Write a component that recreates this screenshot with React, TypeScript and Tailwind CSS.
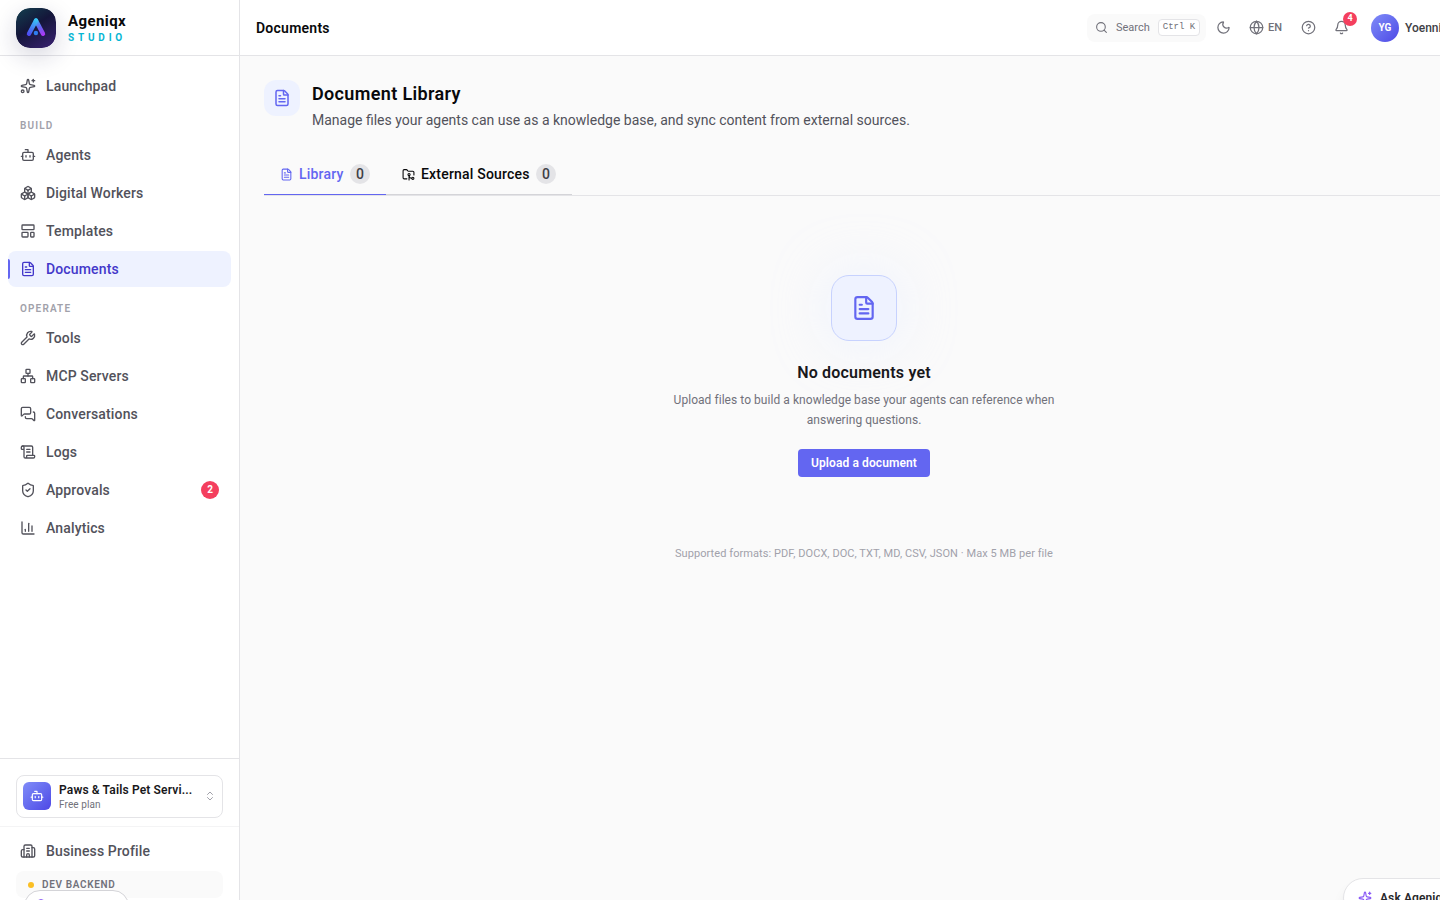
import React from 'react';
import {
  Bell,
  Bot,
  Boxes,
  Building2,
  ChartColumn,
  ChevronsUpDown,
  CircleHelp,
  FileText,
  FolderGit2,
  Globe,
  LayoutTemplate,
  MessagesSquare,
  Moon,
  Network,
  ScrollText,
  Search,
  ShieldCheck,
  Sparkles,
  Wrench,
  type LucideIcon,
} from 'lucide-react';

type NavItem = {
  label: string;
  icon: LucideIcon;
  active?: boolean;
  badge?: number;
};

const buildItems: NavItem[] = [
  { label: 'Agents', icon: Bot },
  { label: 'Digital Workers', icon: Boxes },
  { label: 'Templates', icon: LayoutTemplate },
  { label: 'Documents', icon: FileText, active: true },
];

const operateItems: NavItem[] = [
  { label: 'Tools', icon: Wrench },
  { label: 'MCP Servers', icon: Network },
  { label: 'Conversations', icon: MessagesSquare },
  { label: 'Logs', icon: ScrollText },
  { label: 'Approvals', icon: ShieldCheck, badge: 2 },
  { label: 'Analytics', icon: ChartColumn },
];

const NavLink: React.FC<{ item: NavItem }> = ({ item }) => {
  const Icon = item.icon;
  return (
    <a
      className={`relative flex h-9 items-center gap-2.5 rounded-lg px-3 text-sm font-medium ${
        item.active ? 'bg-[#eef2ff] text-[#4338ca]' : 'text-[#52525b]'
      }`}
    >
      {item.active && <span className="absolute left-0 top-2 h-5 w-0.5 rounded-r-full bg-[#6366f1]" />}
      <Icon size={16} strokeWidth={2} />
      <span className="flex-1 whitespace-nowrap tracking-[0.14px]">{item.label}</span>
      {item.badge && (
        <span className="flex h-[18px] w-[18px] items-center justify-center rounded-full bg-[#f43f5e] text-[10px] font-bold text-white">
          {item.badge}
        </span>
      )}
    </a>
  );
};

const NavHeading: React.FC<{ children: React.ReactNode }> = ({ children }) => (
  <div className="px-3 pt-[14px] pb-1 text-[10px] leading-[15px] font-semibold tracking-[1.15px] text-[#a1a1aa]">
    {children}
  </div>
);

const Logo: React.FC = () => (
  <svg
    className="h-10 w-10 rounded-[14px] shadow-[0_8px_24px_rgba(30,27,75,0.18)]"
    viewBox="0 0 40 40"
    fill="none"
  >
    <defs>
      <linearGradient id="logoBg" x1="6" y1="0" x2="32" y2="40" gradientUnits="userSpaceOnUse">
        <stop stopColor="#133a4c" />
        <stop offset="0.45" stopColor="#14163a" />
        <stop offset="1" stopColor="#35206b" />
      </linearGradient>
      <linearGradient id="logoLeft" x1="20" y1="11" x2="12" y2="27" gradientUnits="userSpaceOnUse">
        <stop stopColor="#38c8f5" />
        <stop offset="1" stopColor="#4f46f5" />
      </linearGradient>
      <linearGradient id="logoRight" x1="20" y1="11" x2="28" y2="27" gradientUnits="userSpaceOnUse">
        <stop stopColor="#38bdf8" />
        <stop offset="0.5" stopColor="#6366f1" />
        <stop offset="1" stopColor="#b035f5" />
      </linearGradient>
    </defs>
    <rect width="40" height="40" rx="14" fill="url(#logoBg)" />
    <path d="M20 12.6L27 25.8" stroke="url(#logoRight)" strokeWidth="4.4" strokeLinecap="round" />
    <path d="M20 12.6L13 25.8" stroke="url(#logoLeft)" strokeWidth="4.4" strokeLinecap="round" />
    <circle cx="19.9" cy="25" r="2.2" fill="#2f7df0" />
  </svg>
);

const Sidebar: React.FC = () => (
  <aside className="flex h-full w-60 shrink-0 flex-col border-r border-[#e4e4e7] bg-white">
    <div className="flex h-14 shrink-0 items-center gap-3 border-b border-[#e4e4e7] px-4">
      <Logo />
      <div className="flex flex-col">
        <span className="text-[15px] leading-[18px] font-bold tracking-[0.4px] text-[#09090b]">Ageniqx</span>
        <span className="pt-px text-[10px] leading-[13px] font-bold tracking-[3.8px] text-[#06b6d4]">STUDIO</span>
      </div>
    </div>

    <nav className="flex flex-1 flex-col px-2 pt-3">
      <NavLink item={{ label: 'Launchpad', icon: Sparkles }} />
      <NavHeading>BUILD</NavHeading>
      <div className="flex flex-col gap-0.5">
        {buildItems.map((item) => (
          <NavLink key={item.label} item={item} />
        ))}
      </div>
      <NavHeading>OPERATE</NavHeading>
      <div className="flex flex-col gap-0.5">
        {operateItems.map((item) => (
          <NavLink key={item.label} item={item} />
        ))}
      </div>
    </nav>

    <div className="h-[142px] shrink-0 border-t border-[#e4e4e7]">
      <div className="border-b border-[#f4f4f5] px-4 pt-4 pb-2">
        <div className="flex h-[43px] items-center gap-2 rounded-lg border border-[#e4e4e7] px-1.5">
          <div className="mb-0.5 flex h-7 w-7 shrink-0 items-center justify-center rounded-md bg-gradient-to-br from-[#818cf8] to-[#4f46e5] text-white">
            <Bot size={14} />
          </div>
          <div className="flex flex-1 flex-col pt-0.5">
            <span className="whitespace-nowrap text-xs leading-[15px] font-semibold tracking-[0.15px] text-[#18181b]">
              Paws &amp; Tails Pet Servi...
            </span>
            <span className="text-[10px] leading-[14px] tracking-[0.1px] text-[#71717a]">Free plan</span>
          </div>
          <ChevronsUpDown size={12} className="mb-0.5 text-[#a1a1aa]" />
        </div>
      </div>
      <div className="px-2 pt-1.5">
        <NavLink item={{ label: 'Business Profile', icon: Building2 }} />
      </div>
      <div className="relative mx-4 mt-0.5 flex h-[27px] items-center gap-2 rounded-lg bg-[#fafafa] px-3">
        <span className="h-1.5 w-1.5 rounded-full bg-[#fbbf24]" />
        <span className="text-[10px] font-semibold tracking-[0.65px] text-[#71717a]">DEV BACKEND</span>
        <div className="absolute top-[19px] left-2 flex h-8 w-[105px] rounded-full border border-[#d4d4d8] bg-white pt-2 pl-3">
          <span className="h-2 w-2 rounded-sm border border-[#8b5cf6]" />
        </div>
      </div>
    </div>
  </aside>
);

const Header: React.FC = () => (
  <header className="flex h-14 shrink-0 items-center border-b border-[#e4e4e7] bg-white pl-4 text-[#71717a]">
    <h1 className="w-[831px] text-sm font-semibold tracking-[0.25px] text-[#09090b]">Documents</h1>
    <div className="flex h-7 w-[119px] items-center rounded-lg bg-[#fafafa] pl-2">
      <Search size={13} />
      <span className="ml-2 w-[42px] pt-0.5 text-[11px]">Search</span>
      <kbd className="flex h-[17px] w-[42px] items-center justify-center rounded border border-[#e4e4e7] bg-white pt-px font-['Liberation_Mono',monospace] text-[9px]">
        Ctrl K
      </kbd>
    </div>
    <Moon size={15} className="ml-[10px]" />
    <Globe size={15} className="ml-[18px]" />
    <span className="ml-1 w-[15px] pt-0.5 text-[11px] font-medium">EN</span>
    <CircleHelp size={15} className="ml-[18px]" />
    <div className="relative ml-[18px]">
      <Bell size={15} />
      <span className="absolute -top-2 left-[9px] flex h-3.5 w-3.5 items-center justify-center rounded-full bg-[#f43f5e] text-[9px] font-bold text-white">
        4
      </span>
    </div>
    <div className="ml-[22px] flex h-7 w-7 shrink-0 items-center justify-center rounded-full bg-gradient-to-br from-[#818cf8] to-[#4f46e5] text-[10px] font-bold text-white">
      YG
    </div>
    <span className="ml-1.5 text-xs font-medium text-[#3f3f46]">Yoenni</span>
  </header>
);

const Tab: React.FC<{ label: string; icon: LucideIcon; active?: boolean; className: string }> = ({
  label,
  icon: Icon,
  active,
  className,
}) => (
  <button
    className={`flex h-[41px] items-center border-b px-4 text-sm font-medium whitespace-nowrap ${className} ${
      active ? 'border-[#6366f1] text-[#6366f1]' : 'border-[#d4d4d8] text-[#09090b]'
    }`}
  >
    <Icon size={13} className="mr-1.5 shrink-0" />
    <span className="flex-1 text-left tracking-[0.2px]">{label}</span>
    <span className="flex h-5 w-5 items-center justify-center rounded-full bg-[#e4e4e7] text-[#3f3f46]">0</span>
  </button>
);

const DocumentLibrary: React.FC = () => (
  <main className="flex-1 px-6 pt-6">
    <div className="flex gap-3">
      <div className="flex h-9 w-9 items-center justify-center rounded-xl bg-[#eef2ff] text-[#6366f1]">
        <FileText size={18} />
      </div>
      <div>
        <h2 className="text-lg leading-7 font-semibold tracking-[0.35px] text-[#09090b]">Document Library</h2>
        <p className="mt-0.5 text-sm text-[#52525b]">
          Manage files your agents can use as a knowledge base, and sync content from external sources.
        </p>
      </div>
    </div>

    <div className="mt-6 flex h-[42px] border-b border-[#e4e4e7]">
      <Tab label="Library" icon={FileText} active className="w-[122px]" />
      <Tab label="External Sources" icon={FolderGit2} className="w-[186px]" />
    </div>

    <div className="flex flex-col items-center pt-[79px] text-center">
      <div className="flex h-[66px] w-[66px] items-center justify-center rounded-[18px] border border-[#c7d2fe] bg-[#eef2ff] text-[#6366f1] shadow-[0_0_50px_8px_rgba(238,242,255,0.7)]">
        <FileText size={26} strokeWidth={2} />
      </div>
      <h3 className="mt-5 text-base font-semibold tracking-[0.2px] text-[#18181b]">No documents yet</h3>
      <p className="mt-[5px] w-[400px] text-xs leading-5 tracking-[0.05px] whitespace-nowrap text-[#71717a]">
        Upload files to build a knowledge base your agents can reference when
        <br />
        answering questions.
      </p>
      <button className="mt-[19px] h-7 w-[132px] rounded bg-[#6366f1] text-xs font-semibold tracking-[0.1px] text-white">
        Upload a document
      </button>
      <p className="mt-[69px] text-[11px] leading-4 tracking-[0.07px] text-[#a1a1aa]">
        Supported formats: PDF, DOCX, DOC, TXT, MD, CSV, JSON · Max 5 MB per file
      </p>
    </div>
  </main>
);

const App: React.FC = () => {
  return (
    <div className="relative h-[900px] w-[1440px] overflow-hidden bg-[#fafafa] font-['Roboto',sans-serif]">
      <div className="flex h-full w-[1488px]">
        <Sidebar />
        <div className="flex min-w-0 flex-1 flex-col">
          <Header />
          <DocumentLibrary />
        </div>
      </div>
      <button className="absolute top-[878px] left-[1343px] flex h-10 w-36 items-center gap-2 rounded-full border border-[#e4e4e7] bg-white pl-3.5 text-xs font-semibold tracking-[0.1px] whitespace-nowrap text-[#27272a] shadow-lg">
        <Sparkles size={14} className="text-[#8b5cf6]" />
        Ask Ageniqx
      </button>
    </div>
  );
};

export default App;
